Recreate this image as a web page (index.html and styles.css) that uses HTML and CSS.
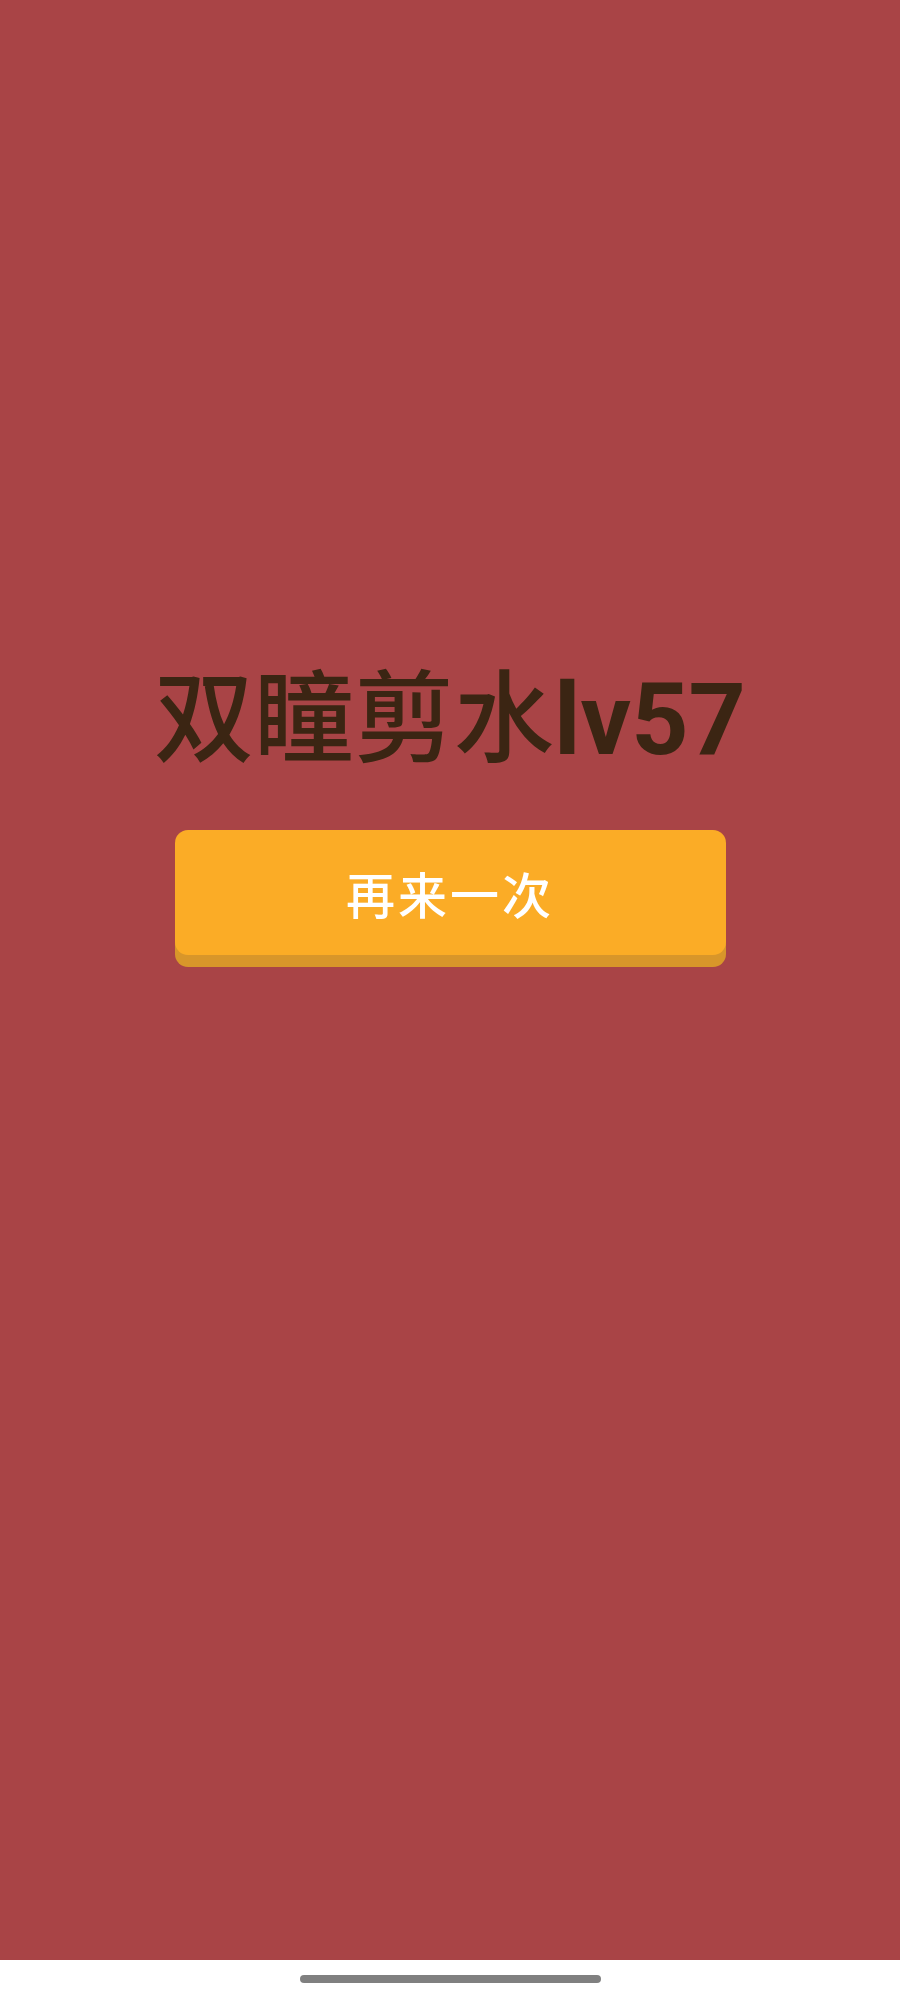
FILE: index.html
```html
<!DOCTYPE html>
<html lang="zh">
<head>
<meta charset="utf-8">
<title>双瞳剪水lv57</title>
<link rel="stylesheet" href="styles.css">
</head>
<body>
<main class="screen">
  <h1 class="title"><span class="title-cjk">双瞳剪水</span><span class="title-lv">lv57</span></h1>
  <button class="retry" type="button">再来一次</button>
</main>
<footer class="navbar"><span class="handle"></span></footer>
</body>
</html>
```
FILE: styles.css
```css
html, body {
  margin: 0;
  padding: 0;
}
body {
  width: 900px;
  height: 2000px;
  background: #ffffff;
  font-family: Roboto, "Noto Sans CJK SC", sans-serif;
}
.screen {
  height: 1960px;
  background: #a94446;
  display: flex;
  flex-direction: column;
  align-items: center;
  box-sizing: border-box;
  padding-top: 650px;
}
.title {
  margin: 0;
  font-family: Roboto, "Noto Sans CJK SC", sans-serif;
  font-size: 100px;
  line-height: 139px;
  color: #3b2513;
  white-space: nowrap;
}
.title-cjk {
  font-weight: 500;
}
.title-lv {
  font-weight: 700;
}
.retry {
  margin-top: 41px;
  width: 551px;
  height: 125px;
  border: 0;
  border-radius: 13px;
  background: #fbac26;
  box-shadow: 0 12px 0 #d8962a;
  color: #ffffff;
  font-family: Roboto, "Noto Sans CJK SC", sans-serif;
  font-size: 49px;
  font-weight: 500;
  letter-spacing: 3px;
  padding: 0;
}
.navbar {
  height: 40px;
  display: flex;
  justify-content: center;
  align-items: flex-start;
}
.handle {
  margin-top: 15px;
  width: 301px;
  height: 8px;
  border-radius: 4px;
  background: #808080;
}
```
